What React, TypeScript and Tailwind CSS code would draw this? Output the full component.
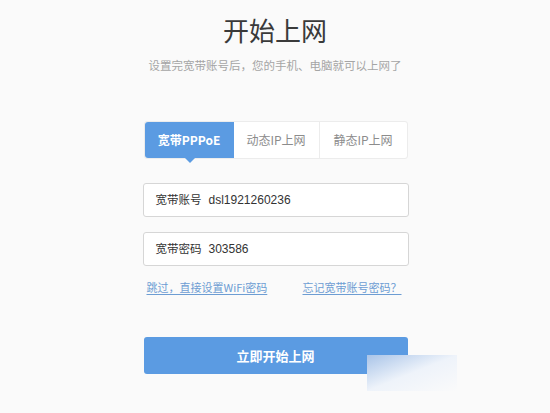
import React from 'react';

const tabs = ['宽带PPPoE', '动态IP上网', '静态IP上网'];

const fields = [
  { label: '宽带账号', value: 'dsl1921260236' },
  { label: '宽带密码', value: '303586' },
];

const App: React.FC = () => {
  return (
    <div
      className="relative w-[550px] h-[413px] overflow-hidden bg-[#fafafa]"
      style={{ fontFamily: '"Microsoft YaHei", "Noto Sans CJK SC", "Liberation Sans", sans-serif' }}
    >
      {/* Header */}
      <div className="pt-[12px] text-center">
        <h1 className="text-[26px] leading-[36px] text-[#3a3a3a]">开始上网</h1>
        <p className="mt-[9px] text-[11.5px] leading-[16px] text-[#a5a5a5]">
          设置完宽带账号后，您的手机、电脑就可以上网了
        </p>
      </div>

      <div className="mx-auto mt-[48px] w-[265px] pl-[1px]">
        {/* Tabs */}
        <div className="relative flex h-[38px] rounded-[3px] border border-[#ececec] bg-white">
          {tabs.map((t, i) => (
            <div
              key={t}
              className={
                i === 0
                  ? 'relative flex w-[89px] items-center justify-center rounded-l-[3px] bg-[#5b9be2] text-[12px] font-bold text-white'
                  : i === 1
                    ? 'flex w-[86px] items-center justify-center border-r border-[#ececec] text-[12px] text-[#8c8c8c]'
                    : 'flex flex-1 items-center justify-center text-[12px] text-[#8c8c8c]'
              }
            >
              {t}
              {i === 0 && (
                <span className="absolute -bottom-[5px] left-[40px] h-0 w-0 border-x-[5px] border-t-[5px] border-x-transparent border-t-[#5b9be2]" />
              )}
            </div>
          ))}
        </div>

        {/* Inputs */}
        <div className="mt-[24px] flex flex-col gap-[15px]">
          {fields.map((f) => (
            <div
              key={f.label}
              className="-ml-[1px] flex h-[34px] w-[266px] items-center rounded-[3px] border border-[#d6d6d6] bg-white pl-[12px] text-[12px] text-[#333]"
            >
              <span className="mr-[7px] text-[11.5px]">{f.label}</span>
              <span style={{ fontFamily: '"Liberation Sans", Arial, sans-serif' }}>{f.value}</span>
            </div>
          ))}
        </div>

        {/* Links */}
        <div className="mt-[13px] flex justify-between px-[3px] text-[11px] leading-[16px] text-[#6d9dd3]">
          <a className="underline underline-offset-2">跳过，直接设置WiFi密码</a>
          <a className="mr-[3px] underline underline-offset-2">忘记宽带账号密码？</a>
        </div>

        {/* Submit */}
        <button className="mt-[42px] flex h-[37px] w-[264px] items-center justify-center rounded-[3px] bg-[#5b9be2] text-[13px] font-bold text-white">
          立即开始上网
        </button>
      </div>

      {/* watermark overlay */}
      <div className="absolute left-[367px] top-[355px] h-[36px] w-[90px] bg-gradient-to-br from-[#a9c4e8] via-[#eef3fa] to-transparent" />
    </div>
  );
};

export default App;
